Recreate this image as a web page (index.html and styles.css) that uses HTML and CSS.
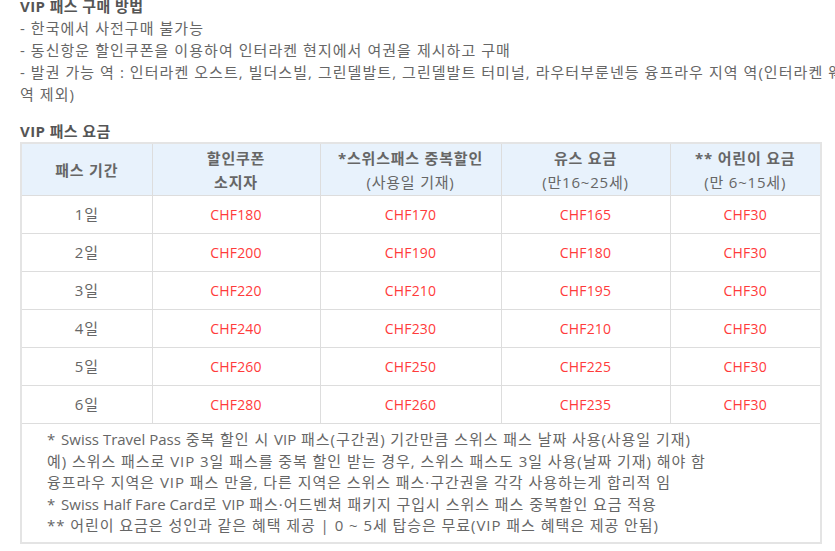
FILE: index.html
```html
<!DOCTYPE html>
<html lang="ko">
<head>
<meta charset="utf-8">
<link rel="stylesheet" href="styles.css">
</head>
<body>
<div class="page">
  <section class="intro">
    <h3 class="title">VIP 패스 구매 방법</h3>
    <p class="line">- 한국에서 사전구매 불가능</p>
    <p class="line">- 동신항운 할인쿠폰을 이용하여 인터라켄 현지에서 여권을 제시하고 구매</p>
    <p class="line">- 발권 가능 역 : 인터라켄 오스트, 빌더스빌, 그린델발트, 그린델발트 터미널, 라우터부룬넨등 융프라우 지역 역(인터라켄 웨스트<br>역 제외)</p>
  </section>
  <h3 class="title title-fare">VIP 패스 요금</h3>
  <table class="fare">
    <colgroup>
      <col class="c1"><col class="c2"><col class="c3"><col class="c4"><col class="c5">
    </colgroup>
    <thead>
      <tr>
        <th>패스 기간</th>
        <th>할인쿠폰<br>소지자</th>
        <th>*스위스패스 중복할인<br><span class="sub">(사용일 기재)</span></th>
        <th>유스 요금<br><span class="sub">(만16~25세)</span></th>
        <th>** 어린이 요금<br><span class="sub">(만 6~15세)</span></th>
      </tr>
    </thead>
    <tbody>
      <tr><td>1일</td><td class="price">CHF180</td><td class="price">CHF170</td><td class="price">CHF165</td><td class="price">CHF30</td></tr>
      <tr><td>2일</td><td class="price">CHF200</td><td class="price">CHF190</td><td class="price">CHF180</td><td class="price">CHF30</td></tr>
      <tr><td>3일</td><td class="price">CHF220</td><td class="price">CHF210</td><td class="price">CHF195</td><td class="price">CHF30</td></tr>
      <tr><td>4일</td><td class="price">CHF240</td><td class="price">CHF230</td><td class="price">CHF210</td><td class="price">CHF30</td></tr>
      <tr><td>5일</td><td class="price">CHF260</td><td class="price">CHF250</td><td class="price">CHF225</td><td class="price">CHF30</td></tr>
      <tr><td>6일</td><td class="price">CHF280</td><td class="price">CHF260</td><td class="price">CHF235</td><td class="price">CHF30</td></tr>
      <tr>
        <td colspan="5" class="notes">
          * <span class="en">Swiss Travel Pass</span> 중복 할인 시 <span class="en">VIP</span> 패스(구간권) 기간만큼 스위스 패스 날짜 사용(사용일 기재)<br>
          예) 스위스 패스로 VIP 3일 패스를 중복 할인 받는 경우, 스위스 패스도 3일 사용(날짜 기재) 해야 함<br>
          융프라우 지역은 VIP 패스 만을, 다른 지역은 스위스 패스·구간권을 각각 사용하는게 합리적 임<br>
          * <span class="en">Swiss Half Fare Card</span>로 <span class="en">VIP</span> 패스·어드벤쳐 패키지 구입시 스위스 패스 중복할인 요금 적용<br>
          ** 어린이 요금은 성인과 같은 혜택 제공 | 0 ~ 5세 탑승은 무료(VIP 패스 혜택은 제공 안됨)
        </td>
      </tr>
    </tbody>
  </table>
</div>
</body>
</html>
```

FILE: styles.css
```css
html, body {
  margin: 0;
  padding: 0;
  background: #ffffff;
  overflow: hidden;
}

body {
  font-family: "Open Sans", "Noto Sans CJK KR", sans-serif;
  font-size: 15px;
  letter-spacing: 0.8px;
  color: #666666;
}

.page {
  padding: 0 0 0 20px;
  margin-top: -5px;
  width: 1000px;
}

.title {
  margin: 0;
  font-size: 15px;
  font-weight: bold;
  line-height: 22px;
  letter-spacing: 0.4px;
  color: #555555;
}

.line {
  margin: 0;
  line-height: 22px;
  letter-spacing: 1.05px;
  white-space: nowrap;
}

.title-fare {
  margin-top: 15px;
}

.fare {
  border-collapse: collapse;
  table-layout: fixed;
  width: 800px;
  border: 2px solid #e4e4e4;
}

.c1 { width: 131px; }
.c2 { width: 168px; }
.c3 { width: 181px; }
.c4 { width: 169px; }
.c5 { width: 151px; }

.fare th,
.fare td {
  border: 1px solid #dddddd;
  text-align: center;
}

.fare th {
  background: #e8f2fc;
  font-weight: bold;
  color: #666666;
  line-height: 24px;
  padding: 2px 2px 1px;
}

.fare th .sub {
  font-weight: normal;
}

.fare td {
  padding: 8px 4px;
  line-height: 21px;
  color: #666666;
}

.fare td.price {
  color: #ff3b3b;
  font-size: 14px;
  letter-spacing: 0.2px;
}

.fare td.notes {
  text-align: left;
  padding: 5px 10px 5px 25px;
  line-height: 21.6px;
  letter-spacing: 0.95px;
  white-space: nowrap;
}

.notes .en {
  letter-spacing: 0;
}
```
